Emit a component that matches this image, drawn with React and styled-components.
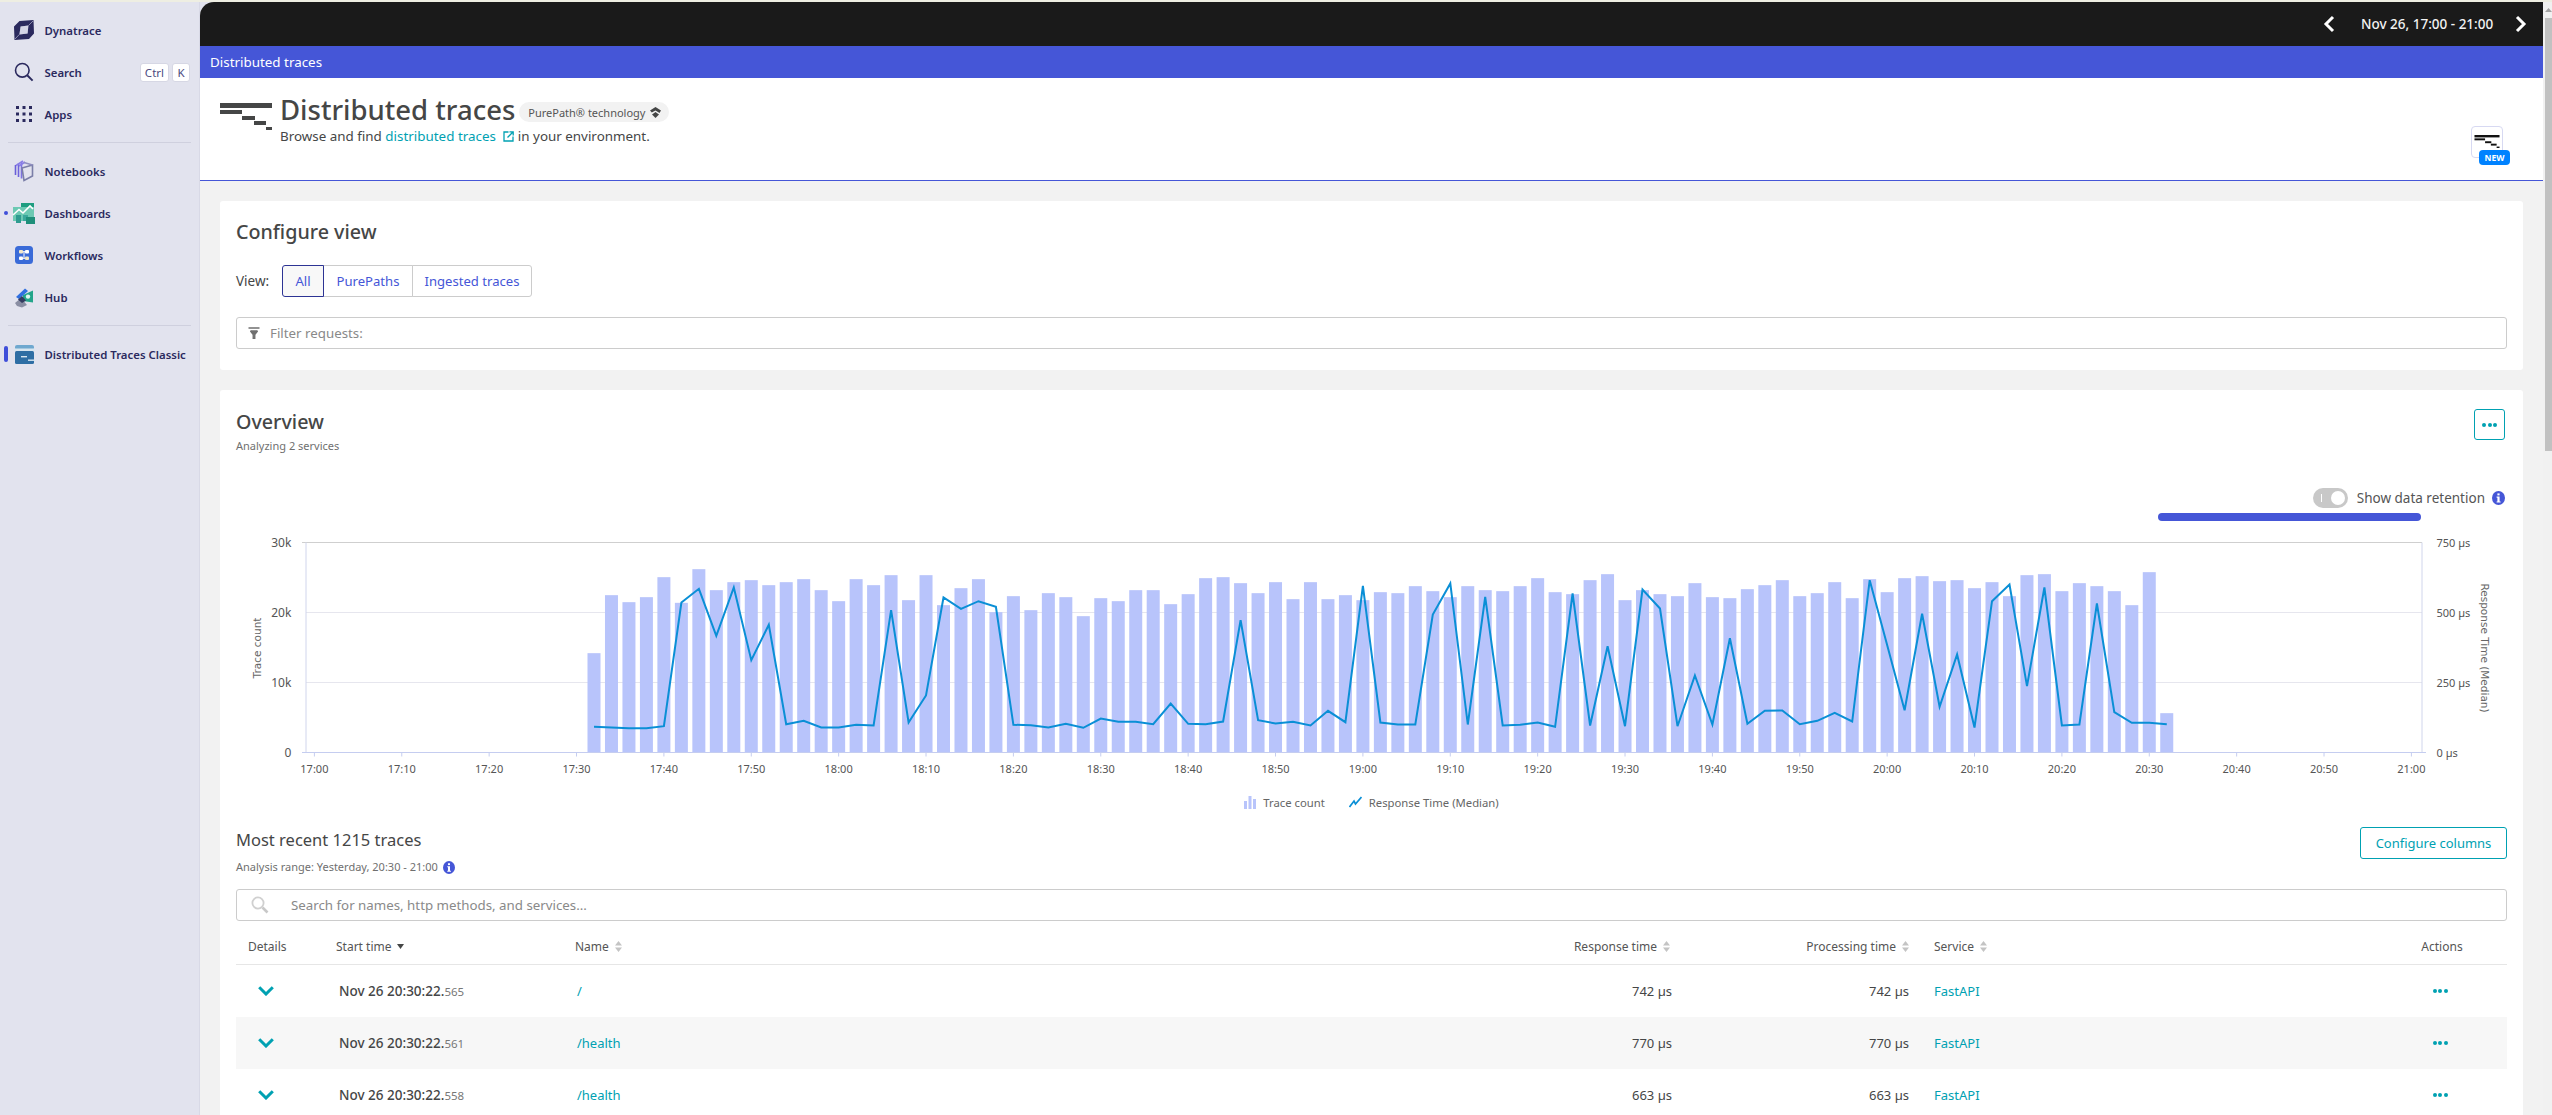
import React from "react";
import styled, { createGlobalStyle } from "styled-components";

const FONT = `"Noto Sans", "Open Sans", "Liberation Sans", sans-serif`;

const Global = createGlobalStyle`
  html, body { margin: 0; padding: 0; background: #e2e3ee; }
  body { font-family: ${FONT}; color: #454646; }
  * { box-sizing: border-box; }
`;

const Page = styled.div`
  width: 2552px; height: 1115px; overflow: hidden;
  display: flex; flex-direction: column; background: #e2e3ee;
`;
const TopStrip = styled.div`height: 2px; flex: none; background: #eeeee2;`;
const Shell = styled.div`flex: 1; display: flex; min-height: 0;`;

const Sidebar = styled.nav`
  width: 200px; flex: none; padding-top: 7px;
  display: flex; flex-direction: column;
  border-right: 1px solid #d8d9e6;
`;
const NavItem = styled.div`
  height: 42px; flex: none; display: flex; align-items: center;
  padding-left: 4px; padding-right: 9px;
`;
const MarkerSlot = styled.span`
  width: 10px; flex: none; display: flex; align-items: center; justify-content: flex-start;
`;
const Dot = styled.i`
  display: block; width: 4px; height: 4px; border-radius: 50%; background: #3f4fd9;
`;
const ActiveBar = styled.i`
  display: block; width: 4px; height: 16px; border-radius: 2px; background: #3f4fd9;
`;
const NavIcon = styled.span`
  width: 20px; height: 20px; flex: none; display: flex; align-items: center; justify-content: center;
  svg { display: block; overflow: visible; }
`;
const NavLabel = styled.span`
  margin-left: 10.5px; font-size: 11.4px; font-weight: 600; color: #2b2a5e; white-space: nowrap;
`;
const Keys = styled.span`margin-left: auto; display: flex; gap: 3px;`;
const Key = styled.kbd`
  font-family: ${FONT}; font-size: 11.5px; color: #4a4a80; background: #fff; height: 19px;
  min-width: 18px; padding: 0 4px; line-height: 17px; text-align: center;
  border: 1px solid #d6d7e4; border-radius: 3px;
`;
const NavDivider = styled.hr`
  margin: 7px 8px; height: 1px; border: 0; background: #cfd0de; flex: none;
`;

const Main = styled.main`flex: 1; min-width: 0; display: flex; flex-direction: column; background: #f2f2f2; overflow: hidden;
  border-top-left-radius: 14px;`;
const TimeBar = styled.div`
  height: 44px; flex: none; background: #1a1a1a; color: #f2f2f2;
  display: flex; align-items: center; justify-content: flex-end; padding-right: 15px;
`;
const TimeLabel = styled.span`font-size: 13.5px; width: 128px; text-align: center; margin: 0 25px; font-weight: 500; white-space: nowrap;`;
const BlueBar = styled.div`
  height: 32px; flex: none; background: #4556d7; color: #fff; font-size: 13.4px;
  display: flex; align-items: center; padding-left: 10px;
`;
const Header = styled.header`
  height: 103px; flex: none; background: #fff; border-bottom: 1px solid #4556d7;
  display: flex; justify-content: space-between; padding: 16px 40px 0 20px;
`;
const HeaderLeft = styled.div`display: flex; gap: 8px;`;
const TraceLogo = styled.svg`margin-top: 9px; flex: none; display: block;`;
const TitleRow = styled.div`display: flex; align-items: center; height: 32px;`;
const PageTitle = styled.h1`
  margin: 0; font-size: 27.5px; line-height: 32px; font-weight: 500; color: #454646; white-space: nowrap;
`;
const Chip = styled.span`
  margin-left: 4px; margin-top: 4px; height: 20px; border-radius: 10px; background: #f2f2f2; color: #555;
  font-size: 11px; padding: 0 8px 0 9px; display: flex; align-items: center; gap: 5px; white-space: nowrap;
`;
const Subtitle = styled.p`
  margin: 0; font-size: 13.4px; line-height: 20px; color: #454646; display: flex; align-items: center; white-space: pre;
`;
const TealLink = styled.a`color: #00a1b2; display: inline-flex; align-items: center; gap: 4px;`;
const NewTile = styled.div`
  position: relative; width: 32px; height: 32px; margin-top: 32px; border: 1px solid #d7d9f2; border-radius: 4px;
  display: flex; justify-content: center; padding-top: 8px;
`;
const NewBadge = styled.span`
  position: absolute; left: 7px; top: 23px; width: 31px; height: 15px; background: #0082ff; color: #fff;
  border-radius: 4px; font-size: 8.5px; font-weight: 700; line-height: 15px; text-align: center;
`;

const Content = styled.div`flex: 1; min-height: 0; padding: 20px; display: flex; flex-direction: column; gap: 20px;`;
const Card = styled.section`
  background: #fff; border-radius: 3px; padding: ${p => p.$pad}; flex: none;
`;
const SectionTitle = styled.h2`
  margin: 0; font-size: 19.7px; line-height: 28px; font-weight: 500; color: #454646;
`;
const ViewRow = styled.div`
  margin-top: 19px; height: 32px; display: flex; align-items: center; font-size: 13.5px; color: #454646;
`;
const ViewLabel = styled.span`width: 46px; flex: none;`;
const Segments = styled.div`display: flex;`;
const Segment = styled.button`
  height: 32px; width: ${p => p.$w}px; font-family: ${FONT}; font-size: 13.1px; color: #4556d7; padding: 0;
  background: ${p => (p.$active ? "#f8f8f8" : "#fff")};
  border: 1px solid ${p => (p.$active ? "#2d3494" : "#ccc")};
  margin-left: ${p => (p.$first ? 0 : -1)}px;
  border-radius: ${p => p.$radius};
  position: relative; z-index: ${p => (p.$active ? 1 : 0)};
`;
const Field = styled.div`
  margin-top: ${p => p.$mt}px; height: 32px; border: 1px solid #ccc; border-radius: 3px; background: #fff;
  display: flex; align-items: center; padding-left: ${p => p.$pl}px; gap: ${p => p.$gap}px;
  color: #898989; font-size: 13.3px;
`;

const HeadRow = styled.div`display: flex; justify-content: space-between; align-items: flex-start;`;
const Caption = styled.div`
  font-size: 11px; line-height: 16px; color: #6f6f6f; margin-top: ${p => p.$mt || 0}px;
  display: flex; align-items: center; gap: 5px;
`;
const IconButton = styled.button`
  width: 31px; height: 31px; margin: 1px 2px 0 0; padding: 0; background: #fff; border: 1px solid #00a1b2; border-radius: 3px;
  display: flex; align-items: center; justify-content: center;
`;
const DotsRow = styled.span`display: flex; gap: 1.5px; justify-content: center;`;
const TealDot = styled.i`display: block; width: 4px; height: 4px; border-radius: 50%; background: #00a1b2;`;
const RetentionRow = styled.div`
  margin-top: 34px; height: 20px; display: flex; justify-content: flex-end; align-items: center;
  font-size: 13.5px; color: #555; padding-right: 2px;
`;
const Toggle = styled.span`
  width: 35px; height: 20px; border-radius: 10px; background: #c8c8c8; display: flex; align-items: center;
  justify-content: space-between; padding: 0 3px 0 8px; margin-right: 9px;
`;
const ToggleMark = styled.i`display:block; width:1px; height:8px; background:#fff;`;
const ToggleKnob = styled.i`display:block; width:14px; height:14px; border-radius:50%; background:#fff;`;
const InfoWrap = styled.span`margin-left: 7px; display: flex;`;
const RetentionBar = styled.div`
  margin: 5px 86px 0 auto; width: 263px; height: 8px; border-radius: 4px; background: #4556d7;
`;
const ChartSvg = styled.svg`display: block; margin-top: 9px;`;
const Legend = styled.div`
  margin-top: 7px; height: 20px; display: flex; justify-content: center; align-items: center; gap: 24px;
  font-size: 11.3px; color: #666;
`;
const LegendItem = styled.span`display: flex; align-items: center; gap: 7px;`;
const TracesHead = styled(HeadRow)`margin-top: 15px;`;
const TracesTitle = styled.h3`margin: 0; font-size: 16.5px; line-height: 26px; font-weight: 400; color: #454646;`;
const OutlineButton = styled.button`
  width: 147px; height: 32px; background: #fff; border: 1px solid #00a1b2; border-radius: 3px;
  color: #00a1b2; font-family: ${FONT}; font-size: 13px; padding: 0;
`;

const cols = "100px 239px 1fr 222px 237px 468px 130px";
const TableHead = styled.div`
  display: grid; grid-template-columns: ${cols}; align-items: center; height: 44px; padding-top: 7px;
  border-bottom: 1px solid #e6e6e6; font-size: 12px; color: #555;
`;
const Row = styled.div`
  display: grid; grid-template-columns: ${cols}; align-items: center; height: 52px;
  background: ${p => (p.$alt ? "#f7f7f7" : "#fff")}; font-size: 13px; color: #454646;
`;
const HeadCell = styled.div`
  display: flex; align-items: center; gap: 6px; white-space: nowrap;
  justify-content: ${p => (p.$align === "right" ? "flex-end" : p.$align === "center" ? "center" : "flex-start")};
  padding-left: ${p => p.$pl || 0}px; padding-right: ${p => p.$pr || 0}px;
`;
const Cell = styled.div`
  white-space: nowrap; text-align: ${p => p.$align || "left"};
  padding-left: ${p => p.$pl || 0}px; padding-right: ${p => p.$pr || 0}px;
`;
const DetailCell = styled.div`padding-left: 22px; display: flex; align-items: center;`;
const TimeText = styled.span`font-size: 13.5px; font-weight: 500; color: #454646;`;
const Millis = styled.span`font-size: 11.5px; color: #777;`;
const TableLink = styled.a`color: #00a1b2;`;
const ActionCell = styled.div`display: flex; justify-content: center; padding-right: 4px;`;

const Scrollbar = styled.div`
  width: 9px; flex: none; background: #f1f1f1; display: flex; flex-direction: column; align-items: flex-end;
`;
const ScrollArrow = styled.svg`display: block; margin: 6px 0 0 0;`;
const ScrollThumb = styled.div`width: 7px; height: 433px; margin-top: 6px; background: #c1c1c1;`;

/* ---------- chart data ---------- */
const barH = [298,472,451,466,526,449,550,487,511,517,502,511,520,487,454,520,502,532,457,532,442,493,520,421,
469,427,478,466,409,463,454,487,487,445,475,523,526,508,478,511,460,511,460,472,457,481,478,499,484,466,499,487,484,499,523,481,475,517,535,457,487,475,469,508,466,463,490,502,517,
469,478,511,463,520,481,523,529,514,517,493,511,469,532,535,484,508,499,484,442,541,118];
const lineH = [77,75,73,73,79,450,491,350,495,277,383,85,95,75,75,83,81,427,90,171,465,431,454,437,
83,82,75,86,74,102,92,92,85,147,86,85,93,397,97,87,92,81,125,91,500,90,84,84,414,507,84,467,81,83,90,77,477,81,319,79,489,432,79,231,84,343,86,125,126,
85,95,119,93,517,322,127,416,137,294,75,454,504,199,495,81,84,447,121,89,89,85];

const Y0 = 222.5, YT = 12.5, XL = 70, XR = 2186;
const xAt = (m) => 78.4 + 8.7375 * m;
const ticks = Array.from({ length: 25 }, (_, i) => i * 10);
const tickLabel = (m) => {
  const h = 17 + Math.floor(m / 60);
  const mm = m % 60;
  return `${h}:${mm === 0 ? "00" : mm}`;
};
const axisText = { fontFamily: FONT, fontSize: 11, fill: "#555" };

function Chart() {
  const pts = lineH.map((h, i) => `${xAt(32 + i * 2).toFixed(1)},${(Y0 - h / 3).toFixed(1)}`).join(" ");
  return (
    <ChartSvg width="2271" height="255" viewBox="0 0 2271 255">
      <line x1={XL - 4} x2={XR} y1={YT} y2={YT} stroke="#cfcfcf" strokeWidth="1" />
      {[82.5, 152.5].map((y) => (
        <line key={y} x1={XL} x2={XR} y1={y} y2={y} stroke="#e6e6ee" strokeWidth="1" />
      ))}
      <line x1={XL} x2={XL} y1={YT} y2={Y0} stroke="#d0d5ec" strokeWidth="1" />
      <line x1={XR} x2={XR} y1={YT} y2={Y0} stroke="#d0d5ec" strokeWidth="1" />
      {barH.map((h, i) => (
        <rect key={i} x={xAt(32 + i * 2) - 6.5} y={Y0 - h / 3} width="13" height={h / 3} fill="#b8c4fb" />
      ))}
      <line x1={XL - 4} x2={XR + 4} y1={Y0} y2={Y0} stroke="#c5cdf0" strokeWidth="1" />
      {ticks.map((m) => (
        <g key={m}>
          <line x1={xAt(m)} x2={xAt(m)} y1={Y0} y2={Y0 + 4} stroke="#c5cdf0" strokeWidth="1" />
          <text x={xAt(m)} y={Y0 + 20} textAnchor="middle" {...axisText}>{tickLabel(m)}</text>
        </g>
      ))}
      <polyline points={pts} fill="none" stroke="#0a8fd6" strokeWidth="2" strokeLinejoin="miter" />
      {[["30k", YT], ["20k", 82.5], ["10k", 152.5], ["0", Y0]].map(([t, y]) => (
        <text key={t} x={55.4} y={y + 4} textAnchor="end" {...axisText} fontSize="12">{t}</text>
      ))}
      {[["750 µs", YT], ["500 µs", 82.5], ["250 µs", 152.5], ["0 µs", Y0]].map(([t, y]) => (
        <text key={t} x={2200.5} y={y + 4} {...axisText}>{t}</text>
      ))}
      <text transform="translate(25,118) rotate(-90)" textAnchor="middle" fontFamily="DejaVu Sans, sans-serif" fontSize="10.5" fill="#666">Trace count</text>
      <text transform="translate(2245,118) rotate(90)" textAnchor="middle" fontFamily="DejaVu Sans, sans-serif" fontSize="10.5" fill="#666">Response Time (Median)</text>
    </ChartSvg>
  );
}

/* ---------- icons ---------- */
const DtLogo = () => (
  <svg width="20" height="20" viewBox="0 0 20 20">
    <path fillRule="evenodd" fill="#2b2a5e" d="M5.5 1 L19.5 0 L20 13.5 L15 19 L0.5 20 L0 6.5 Z M6.6 6.4 L5.4 14.4 L13.6 13.6 L14.4 5.6 Z" />
    <path d="M14.4 5.6 L19 1 M5.4 14.4 L1 19" stroke="#8e8eb0" strokeWidth="1" fill="none" />
    <path fill="#c3c4dc" d="M6.6 6.4 L14.4 5.6 L13.6 13.6 L5.4 14.4 Z" opacity=".45" />
  </svg>
);
const SearchIc = () => (
  <svg width="20" height="20" viewBox="0 0 20 20" fill="none" stroke="#2b2a5e" strokeWidth="1.6">
    <circle cx="8.3" cy="8.3" r="6.8" />
    <path d="M13.2 13.2 L18.6 18.6" strokeWidth="2" />
  </svg>
);
const AppsIc = () => (
  <svg width="18" height="18" viewBox="0 0 18 18" fill="#2b2a5e">
    {[1, 7.5, 14].flatMap((y) => [1, 7.5, 14].map((x) => <rect key={`${x}-${y}`} x={x} y={y} width="3" height="3" />))}
  </svg>
);
const NotebooksIc = () => (
  <svg width="20" height="22" viewBox="0 0 20 22" fill="none">
    <path d="M1.5 5 L1.5 15" stroke="#6a5fd8" strokeWidth="1.6" />
    <path d="M4.5 3.5 L4.5 17" stroke="#6f63dc" strokeWidth="1.6" />
    <path d="M7.5 2 L7.5 18.5" stroke="#7d72e0" strokeWidth="1.6" />
    <path d="M2 5.5 L9 1" stroke="#8a7fe6" strokeWidth="1.6" />
    <path d="M5 6 L11 2" stroke="#8a7fe6" strokeWidth="1.6" />
    <path d="M8 8 L18.5 5 L18.5 16 L10 20.5 Z" stroke="#7b7fa8" strokeWidth="1.6" />
    <path d="M10 2.5 L18.5 5" stroke="#8f8fc0" strokeWidth="1.6" />
  </svg>
);
const DashboardsIc = () => (
  <svg width="22" height="21" viewBox="0 0 22 21">
    <rect x="8" y="0" width="13" height="6" fill="#1e9d80" />
    <rect x="0" y="4" width="21" height="14" fill="#6cc9b3" />
    <rect x="3" y="12" width="5" height="8" fill="#2f9b90" />
    <rect x="10" y="12" width="5" height="6" fill="#3aa89c" />
    <rect x="13" y="14" width="9" height="7" fill="#1e8f7a" />
    <path d="M0 12 L6 6.5 L10 10 L17 3 L20 6" fill="none" stroke="#fff" strokeWidth="1.6" />
  </svg>
);
const WorkflowsIc = () => (
  <svg width="18" height="18" viewBox="0 0 18 18">
    <rect width="18" height="18" rx="3.5" fill="#3a6bd8" />
    <rect x="4" y="4" width="4" height="3.4" rx="1" fill="#f3e8c8" />
    <rect x="10" y="4" width="4" height="3.4" rx="1" fill="#fff" />
    <rect x="4" y="10.6" width="4" height="3.4" rx="1" fill="#fff" />
    <rect x="10" y="10.6" width="4" height="3.4" rx="1" fill="#f3e8c8" />
    <path d="M8 5.7 H10 M8 12.3 H10 M9 5.7 V12.3" stroke="#fff" strokeWidth="1" />
  </svg>
);
const HubIc = () => (
  <svg width="20" height="21" viewBox="0 0 20 21">
    <path d="M1 16 L7 11 L13 18 L8 20.5 L3 19 Z" fill="#8a8ea3" />
    <path d="M9 8 L19 3.5 L19 15.5 L9 14 Z" fill="#23a58a" />
    <circle cx="14" cy="9.6" r="2.2" fill="#dff5ee" />
    <path d="M2 10 L11 1.5 L14 4 L5 12 Z" fill="#2f6fe0" strokeLinejoin="round" />
    <path d="M4 12.5 L8 9 L12 13.5 L8 16 Z" fill="#333b60" />
  </svg>
);
const ClassicIc = () => (
  <svg width="21" height="19" viewBox="0 0 21 19">
    <rect x="1" y="0" width="19" height="5" rx="2" fill="#6fa8cf" />
    <rect x="0" y="3.5" width="21" height="2.5" fill="#d8e6f0" />
    <rect x="1" y="6" width="19" height="13" rx="1.5" fill="#2e6ea4" />
    <rect x="7" y="11" width="6" height="1.4" fill="#d8e6f0" />
    <rect x="14" y="14.5" width="7" height="1.4" fill="#d8e6f0" />
  </svg>
);
const TraceBars = () => (
  <>
    <rect x="0" y="0" width="52" height="5" />
    <rect x="0" y="7" width="22" height="4" />
    <rect x="22" y="13" width="13" height="4" />
    <rect x="34" y="18" width="12" height="4" />
    <rect x="46" y="24" width="6" height="3" />
  </>
);
const PurePathIc = () => (
  <svg width="11" height="11" viewBox="0 0 11 11" fill="#454646">
    <path d="M5.5 0 L11 3.6 L9.5 6 L5.5 3.4 L1.8 5.6 L0 3.6 Z" />
    <path d="M5.5 5 L9 7.4 L5.5 11 L2 7.4 Z" />
  </svg>
);
const ExternalIc = () => (
  <svg width="11" height="11" viewBox="0 0 11 11" fill="none" stroke="#00a1b2" strokeWidth="1.3">
    <path d="M5.5 1 H1 V10 H10 V5.5" />
    <path d="M4.5 6.5 L10 1 M6.5 0.8 H10.2 V4.5" />
  </svg>
);
const FunnelIc = () => (
  <svg width="12" height="12" viewBox="0 0 12 12" fill="none" stroke="#6f6f6f" strokeWidth="1.3">
    <path d="M0.5 1 H11.5 M2.5 4 H9.5" />
    <path d="M2.5 4 L5.2 7.5 V11.5 H6.8 V7.5 L9.5 4" fill="#6f6f6f" />
  </svg>
);
const LensIc = () => (
  <svg width="18" height="18" viewBox="0 0 18 18" fill="none">
    <circle cx="7" cy="7" r="5.6" stroke="#d0d0d0" strokeWidth="1.8" />
    <path d="M11.5 11.5 L16.5 16.5" stroke="#c8c8c8" strokeWidth="2.6" />
  </svg>
);
const InfoIc = ({ size = 13 }) => (
  <svg width={size} height={size + 1} viewBox="0 0 13 14">
    <ellipse cx="6.5" cy="7" rx="6.5" ry="7" fill="#4556d7" />
    <rect x="5.4" y="2.4" width="2.2" height="2" fill="#fff" />
    <path d="M4.6 5.6 H7.6 V10.4 H8.6 V11.6 H4.6 V10.4 H5.4 V6.8 H4.6 Z" fill="#fff" />
  </svg>
);
const Caret = ({ dir, color = "#fff" }) => (
  <svg width="14" height="18" viewBox="0 0 14 18" fill="none" stroke={color} strokeWidth="3">
    <path d={dir === "l" ? "M11 2 L4 9 L11 16" : "M3 2 L10 9 L3 16"} />
  </svg>
);
const SortBoth = () => (
  <svg width="7" height="11" viewBox="0 0 7 11" fill="#c4c4c4">
    <path d="M3.5 0 L7 4.4 H0 Z M3.5 11 L0 6.6 H7 Z" />
  </svg>
);
const SortDown = () => (
  <svg width="7" height="5" viewBox="0 0 7 5" fill="#454646"><path d="M0 0 H7 L3.5 5 Z" /></svg>
);
const Chevron = () => (
  <svg width="16" height="10" viewBox="0 0 16 10" fill="none" stroke="#00a1b2" strokeWidth="3">
    <path d="M1.2 1.2 L8 8 L14.8 1.2" />
  </svg>
);
const Dots = () => <DotsRow><TealDot /><TealDot /><TealDot /></DotsRow>;
const LegendBars = () => (
  <svg width="12" height="13" viewBox="0 0 12 13" fill="#b8c4fb">
    <rect x="0" y="5" width="3" height="8" /><rect x="4.5" y="0" width="3" height="13" /><rect x="9" y="3" width="3" height="10" />
  </svg>
);
const LegendLine = () => (
  <svg width="13" height="12" viewBox="0 0 13 12" fill="none" stroke="#0a8fd6" strokeWidth="1.7">
    <path d="M0.5 11 L5 5 L6.5 8 L12.5 1" />
  </svg>
);

const rows = [
  { ms: "565", name: "/", t: "742 µs" },
  { ms: "561", name: "/health", t: "770 µs", alt: true },
  { ms: "558", name: "/health", t: "663 µs" },
];

export default function App() {
  return (
    <Page>
      <Global />
      <TopStrip />
      <Shell>
        <Sidebar>
          <NavItem><MarkerSlot /><NavIcon><DtLogo /></NavIcon><NavLabel>Dynatrace</NavLabel></NavItem>
          <NavItem><MarkerSlot /><NavIcon><SearchIc /></NavIcon><NavLabel>Search</NavLabel><Keys><Key>Ctrl</Key><Key>K</Key></Keys></NavItem>
          <NavItem><MarkerSlot /><NavIcon><AppsIc /></NavIcon><NavLabel>Apps</NavLabel></NavItem>
          <NavDivider />
          <NavItem><MarkerSlot /><NavIcon><NotebooksIc /></NavIcon><NavLabel>Notebooks</NavLabel></NavItem>
          <NavItem><MarkerSlot><Dot /></MarkerSlot><NavIcon><DashboardsIc /></NavIcon><NavLabel>Dashboards</NavLabel></NavItem>
          <NavItem><MarkerSlot /><NavIcon><WorkflowsIc /></NavIcon><NavLabel>Workflows</NavLabel></NavItem>
          <NavItem><MarkerSlot /><NavIcon><HubIc /></NavIcon><NavLabel>Hub</NavLabel></NavItem>
          <NavDivider />
          <NavItem><MarkerSlot><ActiveBar /></MarkerSlot><NavIcon><ClassicIc /></NavIcon><NavLabel>Distributed Traces Classic</NavLabel></NavItem>
        </Sidebar>
        <Main>
          <TimeBar>
            <Caret dir="l" />
            <TimeLabel>Nov 26, 17:00 - 21:00</TimeLabel>
            <Caret dir="r" />
          </TimeBar>
          <BlueBar>Distributed traces</BlueBar>
          <Header>
            <HeaderLeft>
              <TraceLogo width="52" height="27" viewBox="0 0 52 27" fill="#454646"><TraceBars /></TraceLogo>
              <div>
                <TitleRow>
                  <PageTitle>Distributed traces</PageTitle>
                  <Chip>PurePath® technology <PurePathIc /></Chip>
                </TitleRow>
                <Subtitle>Browse and find <TealLink>distributed traces <ExternalIc /></TealLink> in your environment.</Subtitle>
              </div>
            </HeaderLeft>
            <NewTile>
              <svg width="26" height="13" viewBox="0 0 52 27" fill="#111"><TraceBars /></svg>
              <NewBadge>NEW</NewBadge>
            </NewTile>
          </Header>
          <Content>
            <Card $pad="17px 16px 21px">
              <SectionTitle>Configure view</SectionTitle>
              <ViewRow>
                <ViewLabel>View:</ViewLabel>
                <Segments>
                  <Segment $w={42} $first $active $radius="3px 0 0 3px">All</Segment>
                  <Segment $w={90} $radius="0">PurePaths</Segment>
                  <Segment $w={120} $radius="0 3px 3px 0">Ingested traces</Segment>
                </Segments>
              </ViewRow>
              <Field $mt={20} $pl={11} $gap={10}><FunnelIc />Filter requests:</Field>
            </Card>
            <Card $pad="18px 16px 0">
              <HeadRow>
                <div>
                  <SectionTitle>Overview</SectionTitle>
                  <Caption $mt={2}>Analyzing 2 services</Caption>
                </div>
                <IconButton aria-label="More"><Dots /></IconButton>
              </HeadRow>
              <RetentionRow>
                <Toggle><ToggleMark /><ToggleKnob /></Toggle>
                Show data retention
                <InfoWrap><InfoIc /></InfoWrap>
              </RetentionRow>
              <RetentionBar />
              <Chart />
              <Legend>
                <LegendItem><LegendBars />Trace count</LegendItem>
                <LegendItem><LegendLine />Response Time (Median)</LegendItem>
              </Legend>
              <TracesHead>
                <div>
                  <TracesTitle>Most recent 1215 traces</TracesTitle>
                  <Caption $mt={6}>Analysis range: Yesterday, 20:30 - 21:00 <InfoIc size={12} /></Caption>
                </div>
                <OutlineButton>Configure columns</OutlineButton>
              </TracesHead>
              <Field $mt={14} $pl={14} $gap={22}><LensIc />Search for names, http methods, and services...</Field>
              <TableHead>
                <HeadCell $pl={12}>Details</HeadCell>
                <HeadCell>Start time <SortDown /></HeadCell>
                <HeadCell>Name <SortBoth /></HeadCell>
                <HeadCell $align="right" $pr={2}>Response time <SortBoth /></HeadCell>
                <HeadCell $align="right">Processing time <SortBoth /></HeadCell>
                <HeadCell $pl={25}>Service <SortBoth /></HeadCell>
                <HeadCell $align="center">Actions</HeadCell>
              </TableHead>
              {rows.map((r, i) => (
                <Row key={i} $alt={r.alt}>
                  <DetailCell><Chevron /></DetailCell>
                  <Cell $pl={3}><TimeText>Nov 26 20:30:22.</TimeText><Millis>{r.ms}</Millis></Cell>
                  <Cell $pl={2}><TableLink>{r.name}</TableLink></Cell>
                  <Cell $align="right">{r.t}</Cell>
                  <Cell $align="right">{r.t}</Cell>
                  <Cell $pl={25}><TableLink>FastAPI</TableLink></Cell>
                  <ActionCell><Dots /></ActionCell>
                </Row>
              ))}
            </Card>
          </Content>
        </Main>
        <Scrollbar>
          <ScrollArrow width="7" height="4" viewBox="0 0 7 4" fill="#a3a3a3"><path d="M3.5 0 L7 4 H0 Z" /></ScrollArrow>
          <ScrollThumb />
        </Scrollbar>
      </Shell>
    </Page>
  );
}
